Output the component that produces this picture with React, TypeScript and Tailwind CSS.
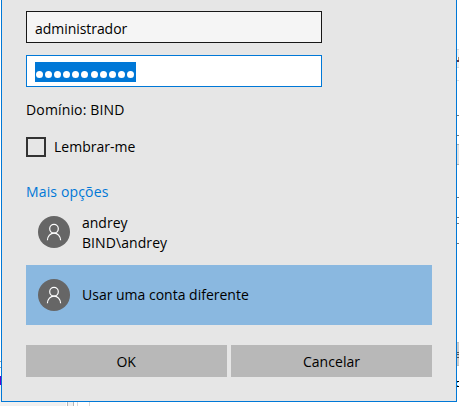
import React from "react";

function Avatar() {
  return (
    <svg className="h-8 w-8 shrink-0" viewBox="0 0 32 32" fill="none">
      <circle cx="16" cy="16" r="16" fill="#666666" />
      <circle cx="16" cy="12.7" r="4.3" stroke="#fff" strokeWidth="1.2" />
      <path d="M9.4 24.2c.2-4 3-7.1 6.600-7.100s6.400 3.100 6.600 7.100" stroke="#fff" strokeWidth="1.2" />
    </svg>
  );
}

type Mark = { gap: string; size: string };

const edgeMarks: Mark[] = [
  { gap: "h-[49px]", size: "h-px bg-[#d9d9d9]" },
  { gap: "h-0", size: "h-[7px] bg-[#f0f0f0]" },
  { gap: "h-0", size: "h-[3px] ml-px bg-[#b58a62]" },
  { gap: "h-0", size: "h-[2px] bg-[#5b3a4a]" },
  { gap: "h-0", size: "h-[5px] bg-[#f0f0f0]" },
  { gap: "h-0", size: "h-px bg-[#d9d9d9]" },
  { gap: "h-[12px]", size: "h-px bg-[#dfdfdf]" },
  { gap: "h-[34px]", size: "h-px bg-[#777777]" },
  { gap: "h-[19px]", size: "h-px bg-[#777777]" },
  { gap: "h-[8px]", size: "h-px bg-[#adadad]" },
  { gap: "h-0", size: "h-[19px] bg-[#e1e1e1]" },
  { gap: "h-0", size: "h-px bg-[#adadad]" },
  { gap: "h-[32px]", size: "h-px bg-[#777777]" },
  { gap: "h-[19px]", size: "h-px bg-[#777777]" },
  { gap: "h-[5px]", size: "h-px bg-[#777777]" },
  { gap: "h-[19px]", size: "h-px bg-[#777777]" },
  { gap: "h-[98px]", size: "h-px bg-[#bfbfbf]" },
  { gap: "h-0", size: "h-[9px] bg-[#cccccc]" },
  { gap: "h-0", size: "h-px bg-[#555555]" },
  { gap: "h-0", size: "h-px bg-[#cccccc]" },
  { gap: "h-0", size: "h-px bg-[#555555]" },
  { gap: "h-0", size: "h-[2px] bg-[#cccccc]" },
  { gap: "h-0", size: "h-px bg-[#555555]" },
  { gap: "h-0", size: "h-[7px] bg-[#cccccc]" },
  { gap: "h-0", size: "h-px bg-[#bfbfbf]" },
  { gap: "h-[15px]", size: "h-px bg-black" },
  { gap: "h-0", size: "h-px w-px bg-[#48b6f0]" },
  { gap: "h-[2px]", size: "h-px w-px bg-[#48b6f0]" },
  { gap: "h-0", size: "h-px bg-black" },
];

export default function App() {
  return (
    <div className="flex h-[406px] w-[459px] flex-col overflow-hidden bg-white font-['Open_Sans','Noto_Sans',sans-serif] text-[14px] leading-5 text-black">
      <div className="flex h-[402px]">
        <div className="flex w-px flex-col">
          <div className="mt-[361px] h-px bg-[#a0a0a0]" />
          <div className="mt-[5px] h-px bg-[#a0a0a0]" />
          <div className="mt-[8px] h-[9px] bg-[#5f00cc]" />
          <div className="h-[17px] bg-[#f0f0f0]" />
        </div>
        <div className="flex w-[456px] flex-col border border-t-0 border-[#0078d7] bg-[#e6e6e6] pl-6 pt-[11px]">
          <div className="flex h-8 w-[296px] items-center border border-[#171717] bg-[#f5f5f5] pl-2 pt-[3px]">
            <span className="tracking-[-0.05px]">administrador</span>
          </div>
          <div className="mt-3 flex h-8 w-[296px] items-center border border-[#0078d7] bg-white pl-2 pt-[2px]">
            <div className="flex h-5 w-[101px] justify-between bg-[#0078d7] pl-[1px] pr-[2px] pt-[8.5px]">
              {Array.from({ length: 11 }, (_, i) => (
                <span key={i} className="h-[7px] w-[7px] rounded-full bg-white" />
              ))}
            </div>
          </div>
          <div className="mt-[13px] h-5 tracking-[0.15px]">Domínio: BIND</div>
          <div className="mt-[17px] flex h-5 items-center gap-2">
            <span className="h-5 w-5 border-2 border-[#333333]" />
            <span>Lembrar-me</span>
          </div>
          <div className="mt-[25px] h-5 tracking-[0.15px] text-[#0078d7]">Mais opções</div>
          <div className="mt-[11px] flex h-10 gap-3 pl-3 pt-px">
            <div className="pt-[2px]">
              <Avatar />
            </div>
            <div className="-mt-px">
              <div>andrey</div>
              <div className="tracking-[0.08px]">BIND\andrey</div>
            </div>
          </div>
          <div className="mt-[12px] flex h-[60px] w-[406px] items-center gap-3 bg-[#8ab8e0] pl-3">
            <Avatar />
            <span>Usar uma conta diferente</span>
          </div>
          <div className="mt-5 flex gap-1">
            <button className="h-8 w-[201px] bg-[#b8b8b8] pr-px pt-px tracking-[-0.2px]">OK</button>
            <button className="h-8 w-[201px] bg-[#b8b8b8] pt-px tracking-[0.05px]">Cancelar</button>
          </div>
        </div>
        <div className="flex w-[2px] flex-col">
          {edgeMarks.map((m, i) => (
            <React.Fragment key={i}>
              <div className={"shrink-0 " + m.gap} />
              <div className={"shrink-0 " + m.size} />
            </React.Fragment>
          ))}
        </div>
      </div>
      <div className="flex h-1">
        <div className="w-[66px] bg-[#f0f0f0]" />
        <div className="ml-px w-px bg-[#b4b4b4]" />
        <div className="w-[5px] bg-[#f0f0f0]" />
        <div className="w-px bg-[#b4b4b4]" />
        <div className="ml-[3px] w-px bg-[#d9d9d9]" />
        <div className="ml-[11px] w-px bg-[#d9d9d9]" />
      </div>
    </div>
  );
}
